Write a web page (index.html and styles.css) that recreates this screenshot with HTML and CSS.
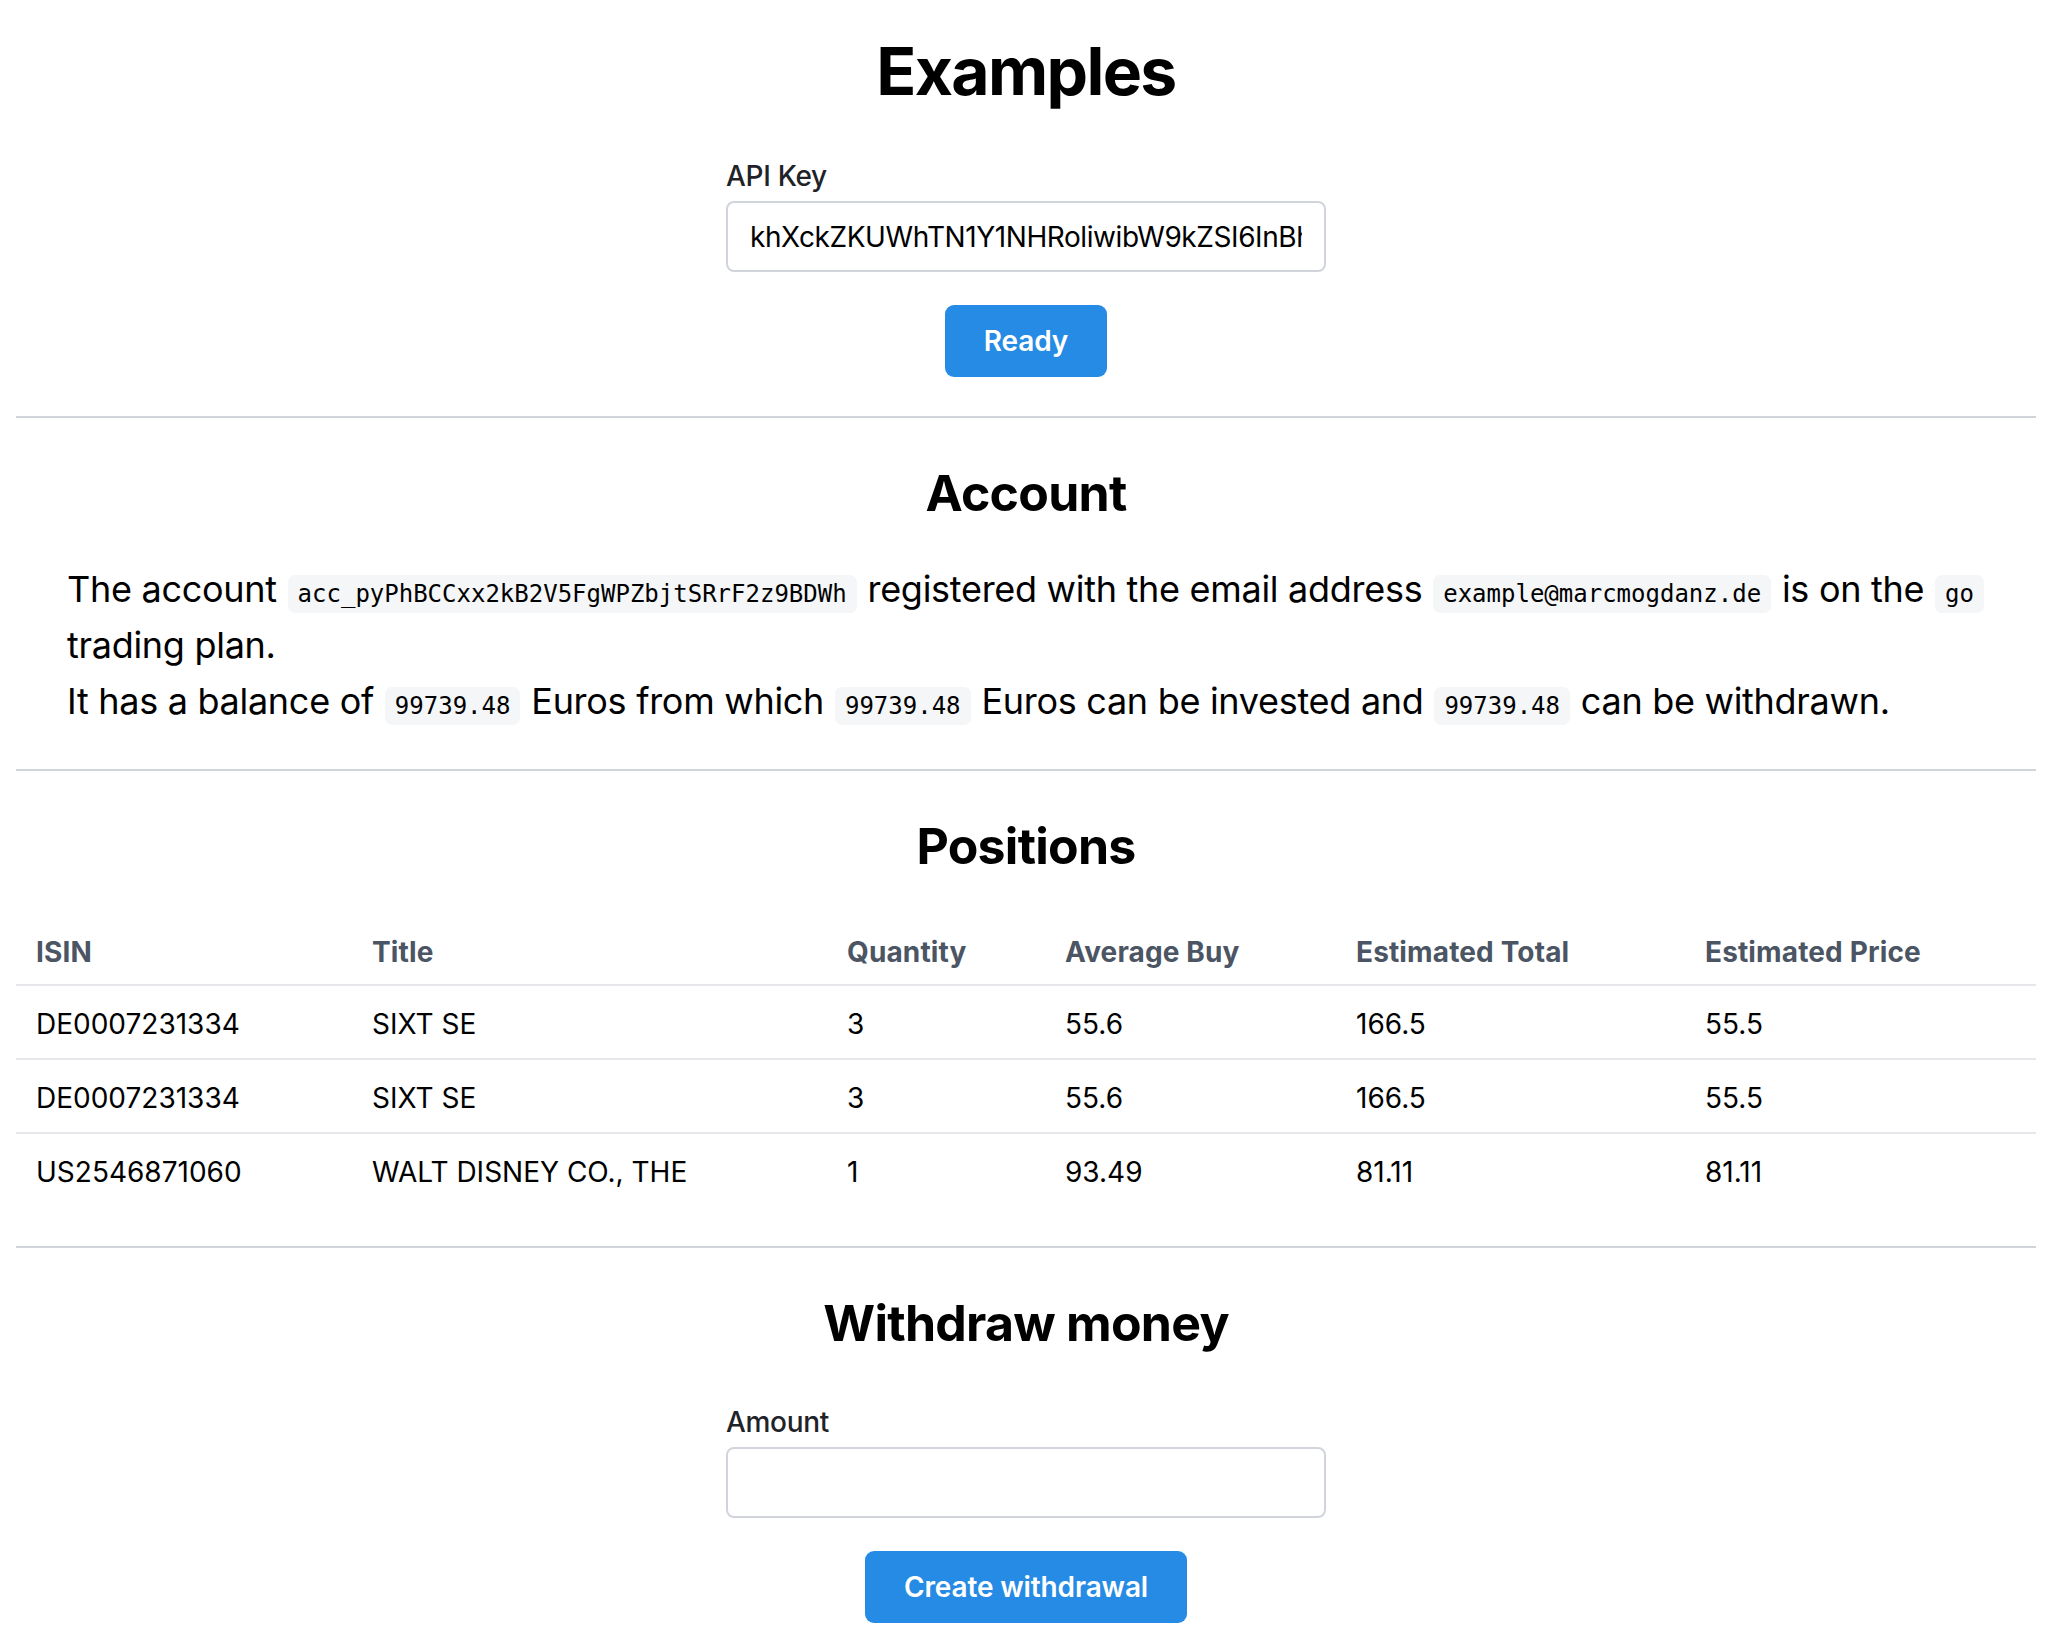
FILE: index.html
```html
<!DOCTYPE html>
<html lang="en">
<head>
<meta charset="utf-8">
<title>Examples</title>
<link rel="stylesheet" href="styles.css">
</head>
<body>
<section class="section section-top">
  <h1 class="title">Examples</h1>
  <form class="form">
    <label class="label" for="apikey">API Key</label>
    <input class="input" id="apikey" type="text" value="khXckZKUWhTN1Y1NHRoliwibW9kZSI6InBhcGVyIiwiaWF0IjoxNjE2">
    <div class="actions"><button class="btn" type="button">Ready</button></div>
  </form>
</section>
<hr class="divider">
<section class="section">
  <h2 class="heading">Account</h2>
  <p class="text"><span class="line">The account <code class="code">acc_pyPhBCCxx2kB2V5FgWPZbjtSRrF2z9BDWh</code> registered with the email address <code class="code">example@marcmogdanz.de</code> is on the <code class="code">go</code></span><br>trading plan.<br>It has a balance of <code class="code">99739.48</code> Euros from which <code class="code">99739.48</code> Euros can be invested and <code class="code">99739.48</code> can be withdrawn.</p>
</section>
<hr class="divider">
<section class="section">
  <h2 class="heading">Positions</h2>
  <table class="table">
    <thead>
      <tr><th>ISIN</th><th>Title</th><th>Quantity</th><th>Average Buy</th><th>Estimated Total</th><th>Estimated Price</th></tr>
    </thead>
    <tbody>
      <tr><td>DE0007231334</td><td>SIXT SE</td><td>3</td><td>55.6</td><td>166.5</td><td>55.5</td></tr>
      <tr><td>DE0007231334</td><td>SIXT SE</td><td>3</td><td>55.6</td><td>166.5</td><td>55.5</td></tr>
      <tr><td>US2546871060</td><td>WALT DISNEY CO., THE</td><td>1</td><td>93.49</td><td>81.11</td><td>81.11</td></tr>
    </tbody>
  </table>
</section>
<hr class="divider">
<section class="section">
  <h2 class="heading">Withdraw money</h2>
  <form class="form form-withdraw">
    <label class="label" for="amount">Amount</label>
    <input class="input" id="amount" type="text" value="">
    <div class="actions"><button class="btn" type="button">Create withdrawal</button></div>
  </form>
</section>
</body>
</html>
```
FILE: styles.css
```css
html, body {
  background: #ffffff;
}
body {
  margin: 0 12px 0 16px;
  font-family: Inter, "Noto Sans", "Liberation Sans", sans-serif;
  color: #000;
  letter-spacing: -0.02em;
}
.section {
  padding: 0;
}
.section-top {
  padding-top: 31px;
}
.title {
  margin: 0;
  font-size: 66px;
  line-height: 80px;
  font-weight: 700;
  letter-spacing: -0.025em;
  text-align: center;
}
.heading {
  margin: 45px 0 0;
  font-size: 50px;
  line-height: 60px;
  font-weight: 700;
  letter-spacing: -0.015em;
  text-align: center;
}
.form {
  width: 600px;
  margin: 45px auto 0;
  display: flex;
  flex-direction: column;
}
.form-withdraw {
  margin-top: 49px;
}
.label {
  font-size: 28px;
  line-height: 40px;
  font-weight: 500;
  color: #1f2328;
  margin-bottom: 5px;
}
.input {
  box-sizing: border-box;
  height: 71px;
  width: 100%;
  border: 2px solid #d1d5db;
  border-radius: 8px;
  padding: 0 22px;
  font-family: inherit;
  font-size: 28px;
  letter-spacing: -0.015em;
  color: #000;
  background: #fff;
  outline: none;
}
.actions {
  display: flex;
  justify-content: center;
  margin-top: 33px;
}
.btn {
  border: 0;
  border-radius: 9px;
  background: #268be4;
  color: #fff;
  font-family: inherit;
  font-size: 28px;
  font-weight: 600;
  letter-spacing: -0.005em;
  line-height: 40px;
  padding: 16px 39px;
  cursor: pointer;
}
.divider {
  border: 0;
  height: 2px;
  background: #d1d5db;
  margin: 40px 0 0;
}
.section-top + .divider {
  margin-top: 39px;
}
.text {
  margin: 38px 0 0;
  padding: 0 48px 0 51px;
  font-size: 36px;
  line-height: 56px;
  letter-spacing: -0.008em;
}
.line {
  white-space: nowrap;
}
.code {
  font-family: "DejaVu Sans Mono", "Liberation Mono", monospace;
  font-size: 24px;
  line-height: 1;
  letter-spacing: 0;
  background: #f5f6f8;
  border-radius: 7px;
  padding: 5px 10px;
  margin: 0 1px;
}
.table {
  margin-top: 40px;
  width: 100%;
  border-collapse: collapse;
  table-layout: fixed;
  font-size: 28px;
  line-height: 40px;
  letter-spacing: 0;
}
.table th, .table td {
  box-sizing: border-box;
  text-align: left;
  padding: 18px 20px 14px;
}
.table th {
  font-weight: 700;
  color: #4b5563;
  letter-spacing: 0.005em;
  padding: 16px 20px 12px;
  border-bottom: 2px solid #e5e7eb;
}
.table tbody tr + tr td {
  border-top: 2px solid #e5e7eb;
}
.table th:nth-child(1) { width: 336px; }
.table th:nth-child(2) { width: 475px; }
.table th:nth-child(3) { width: 218px; }
.table th:nth-child(4) { width: 291px; }
.table th:nth-child(5) { width: 349px; }
```
